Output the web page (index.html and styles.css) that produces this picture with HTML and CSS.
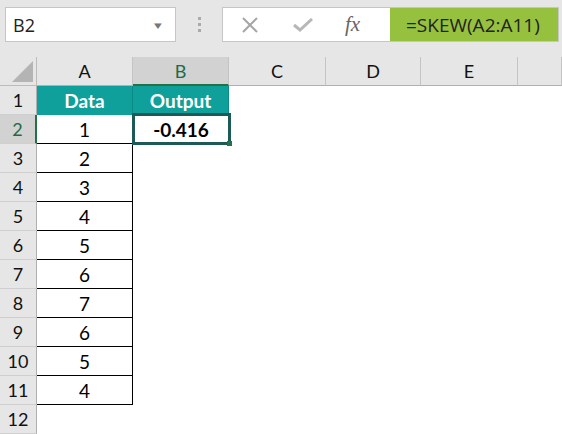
FILE: index.html
```html
<!DOCTYPE html>
<html lang="en">
  <head>
    <meta charset="UTF-8" />
    <title>SKEW</title>
    <link rel="stylesheet" href="styles.css">
  </head>
  <body>
    <div class="toolbar">
      <div class="name-box">
        <span>B2</span>
        <span class="drop">&#9662;</span>
      </div>
      <div class="grip">
        <i></i><i></i><i></i>
      </div>
      <div class="formula-bar">
        <div class="buttons">
          <svg width="18" height="16" viewBox="0 0 18 16"><path d="M2 1 L16 15 M16 1 L2 15" stroke="#a6a6a6" stroke-width="2" fill="none"/></svg>
          <svg width="20" height="14" viewBox="0 0 20 14"><path d="M1 7 L7 12 L19 1" stroke="#b7b7b7" stroke-width="3" fill="none"/></svg>
          <span class="fx">fx</span>
        </div>
        <div class="formula">=SKEW(A2:A11)</div>
      </div>
    </div>

    <div class="sheet" id="sheet"></div>

    <script>
      const cols = ["A", "B", "C", "D", "E", ""];
      const data = [1, 2, 3, 4, 5, 6, 7, 6, 5, 4];
      const sheet = document.getElementById("sheet");
      let html = '<div class="corner"><div class="tri"></div></div>';

      cols.forEach((c) => {
        html += `<div class="col-head${c === "B" ? " active" : ""}">${c}</div>`;
      });

      for (let r = 1; r <= 12; r++) {
        html += `<div class="row-head${r === 2 ? " active" : ""}">${r}</div>`;
        for (let c = 0; c < cols.length; c++) {
          let cls = "cell";
          let text = "";
          if (r === 1 && c === 0) { cls += " th"; text = "Data"; }
          else if (r === 1 && c === 1) { cls += " th"; text = "Output"; }
          else if (r === 2 && c === 1) { cls += " value selected"; text = "-0.416"; }
          else if (c === 0 && r <= 11) { cls += " boxed"; text = data[r - 2]; }
          html += `<div class="${cls}">${text}</div>`;
        }
      }

      sheet.innerHTML = html;
    </script>
  </body>
</html>
```

FILE: styles.css
```css
* {
  margin: 0;
  padding: 0;
  box-sizing: border-box;
}

body {
  background-color: #fff;
  width: 562px;
  height: 434px;
  overflow: hidden;
  font-family: Lato, "Liberation Sans", sans-serif;
  color: #000;
}

.toolbar {
  height: 57px;
  background-color: #e6e6e6;
  display: flex;
  align-items: flex-start;
  padding: 7px 3px 0 5px;
}

.name-box {
  width: 171px;
  height: 35px;
  background-color: #fff;
  border: 1px solid #c6c6c6;
  display: flex;
  align-items: center;
  justify-content: space-between;
  padding: 0 14px 0 7px;
  font-family: "Open Sans", "Noto Sans", sans-serif;
  font-size: 18px;
  color: #222;
}

.drop {
  font-size: 11px;
  color: #777;
  transform: scaleX(1.4);
}

.grip {
  width: 46px;
  height: 35px;
  display: flex;
  flex-direction: column;
  align-items: center;
  justify-content: center;
  gap: 3px;
}

.grip i {
  display: block;
  width: 3px;
  height: 3px;
  background-color: #aaa;
}

.formula-bar {
  flex: 1;
  height: 35px;
  display: flex;
  background-color: #fff;
  border: 1px solid #c6c6c6;
}

.buttons {
  width: 167px;
  display: flex;
  align-items: center;
  padding-left: 18px;
  gap: 34px;
}

.fx {
  font-family: "Liberation Serif", serif;
  font-style: italic;
  font-size: 21px;
  color: #666;
  margin-left: -2px;
}

.formula {
  width: 168px;
  background-color: #95c13e;
  font-family: "Open Sans", "Noto Sans", sans-serif;
  font-size: 19px;
  color: #222;
  display: flex;
  align-items: center;
  padding-left: 16px;
  white-space: nowrap;
}

.sheet {
  display: grid;
  grid-template-columns: 37px 96px 96px 97px 95px 97px 1fr;
  grid-auto-rows: 29px;
  font-size: 19px;
}

.corner {
  background-color: #e6e6e6;
  border-right: 1px solid #bcbcbc;
  border-bottom: 1px solid #bcbcbc;
  position: relative;
}

.tri {
  position: absolute;
  right: 3px;
  bottom: 3px;
  width: 0;
  height: 0;
  border-left: 21px solid transparent;
  border-bottom: 21px solid #b4b4b4;
}

.col-head {
  background-color: #e6e6e6;
  border-right: 1px solid #c4c4c4;
  border-bottom: 1px solid #b0b0b0;
  display: flex;
  align-items: center;
  justify-content: center;
  font-size: 18px;
  color: #111;
}

.col-head.active {
  background-color: #d2d2d2;
  color: #1e6b45;
  border-bottom: 2px solid #217346;
}

.row-head {
  background-color: #e6e6e6;
  border-right: 1px solid #b0b0b0;
  border-bottom: 1px solid #cfcfcf;
  display: flex;
  align-items: center;
  justify-content: center;
  font-size: 18px;
  color: #111;
}

.row-head.active {
  background-color: #d2d2d2;
  color: #1e6b45;
  border-right: 2px solid #217346;
}

.cell {
  display: flex;
  align-items: center;
  justify-content: center;
}

.th {
  background-color: #0fa09b;
  color: #fff;
  font-weight: bold;
  border-right: 1px solid #0c8a86;
}

.boxed {
  border-right: 1px solid #000;
  border-bottom: 1px solid #000;
}

.value {
  font-weight: bold;
}

.selected {
  position: relative;
}

.selected::after {
  content: "";
  position: absolute;
  left: -1px;
  top: -2px;
  right: -2px;
  bottom: -1px;
  border: 3px solid #1b5a57;
}

.selected::before {
  content: "";
  position: absolute;
  right: -3px;
  bottom: -2px;
  width: 5px;
  height: 5px;
  background-color: #217346;
  z-index: 1;
}
```
